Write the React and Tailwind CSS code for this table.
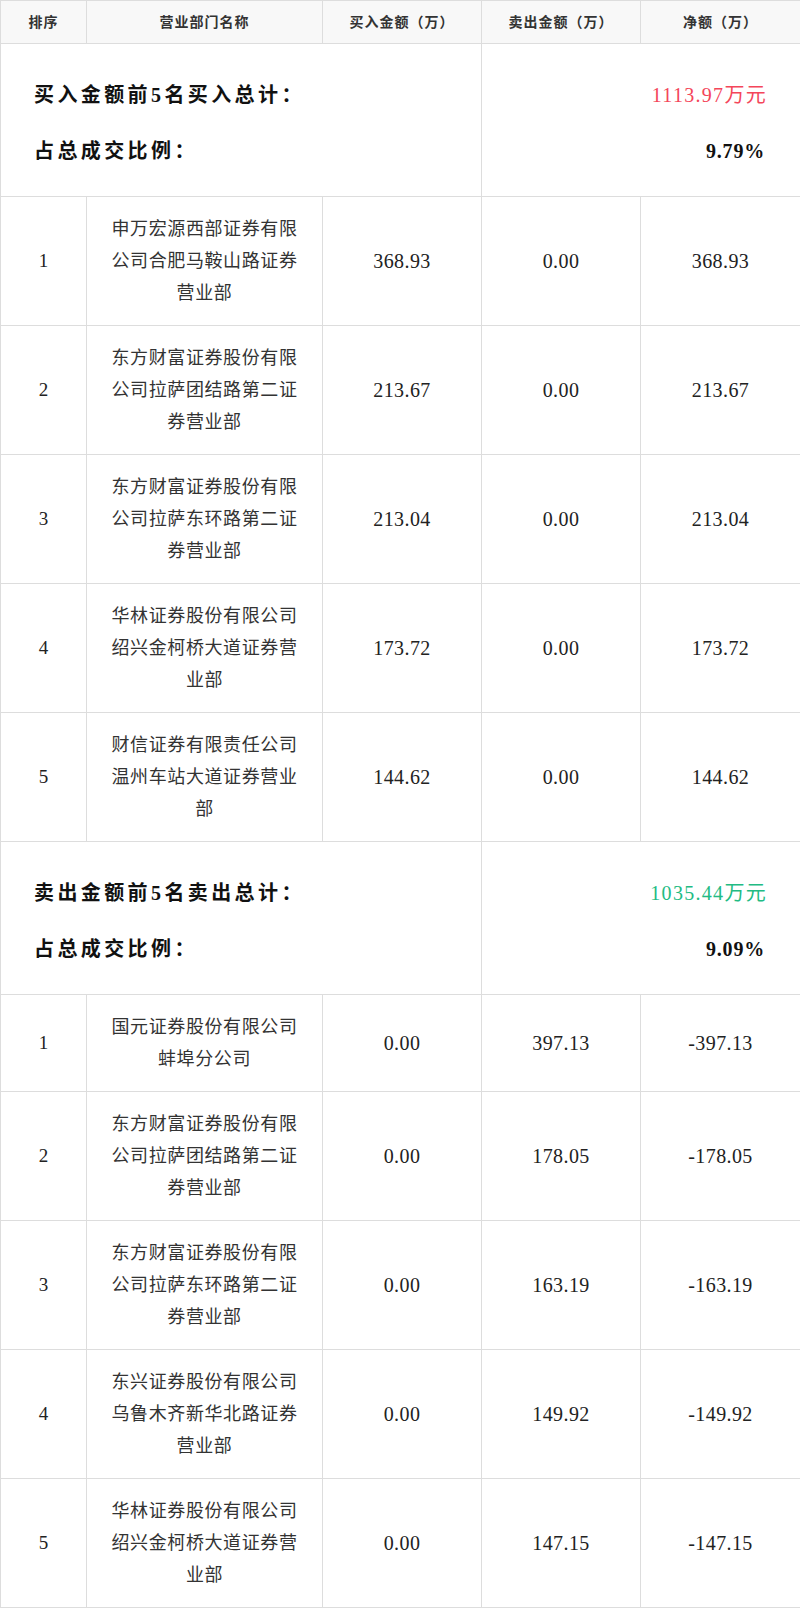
import React from 'react';

const buyRows = [
  ['1', '申万宏源西部证券有限公司合肥马鞍山路证券营业部', '368.93', '0.00', '368.93'],
  ['2', '东方财富证券股份有限公司拉萨团结路第二证券营业部', '213.67', '0.00', '213.67'],
  ['3', '东方财富证券股份有限公司拉萨东环路第二证券营业部', '213.04', '0.00', '213.04'],
  ['4', '华林证券股份有限公司绍兴金柯桥大道证券营业部', '173.72', '0.00', '173.72'],
  ['5', '财信证券有限责任公司温州车站大道证券营业部', '144.62', '0.00', '144.62'],
];

const sellRows = [
  ['1', '国元证券股份有限公司蚌埠分公司', '0.00', '397.13', '-397.13'],
  ['2', '东方财富证券股份有限公司拉萨团结路第二证券营业部', '0.00', '178.05', '-178.05'],
  ['3', '东方财富证券股份有限公司拉萨东环路第二证券营业部', '0.00', '163.19', '-163.19'],
  ['4', '东兴证券股份有限公司乌鲁木齐新华北路证券营业部', '0.00', '149.92', '-149.92'],
  ['5', '华林证券股份有限公司绍兴金柯桥大道证券营业部', '0.00', '147.15', '-147.15'],
];

const font = { fontFamily: '"Liberation Serif", "Noto Sans CJK SC", serif' };

const Summary = ({ label, total, color, ratio }) => (
  <tr>
    <td colSpan={3} className="border border-[#dddddd] pl-[33px] pt-[23px] pb-[17px] align-middle">
      <div className="h-[56px] flex items-center text-[20px] font-bold tracking-[3.4px] text-[#111]">{label}</div>
      <div className="h-[56px] flex items-center text-[20px] font-bold tracking-[3.4px] text-[#111]">占总成交比例：</div>
    </td>
    <td colSpan={2} className="border border-[#dddddd] pr-[33px] pt-[23px] pb-[17px] align-middle">
      <div className={`h-[56px] flex items-center justify-end text-[20px] tracking-[1.3px] ${color}`}>{total}</div>
      <div className="h-[56px] flex items-center justify-end text-[20px] font-bold tracking-[0.8px] text-[#111] pr-[2px]">{ratio}</div>
    </td>
  </tr>
);

const Row = ({ r }) => (
  <tr>
    <td className="border border-[#dddddd] text-center text-[19px] text-[#222]">{r[0]}</td>
    <td className="border border-[#dddddd] text-center px-[20px] py-4 text-[18px] leading-[32px] tracking-[0.6px] text-[#333]">{r[1]}</td>
    <td className="border border-[#dddddd] text-center text-[20px] tracking-[0.4px] text-[#222]">{r[2]}</td>
    <td className="border border-[#dddddd] text-center text-[20px] tracking-[0.4px] text-[#222]">{r[3]}</td>
    <td className="border border-[#dddddd] text-center text-[20px] tracking-[0.4px] text-[#222]">{r[4]}</td>
  </tr>
);

export default function App() {
  return (
    <div className="w-[800px] bg-white" style={font}>
      <table className="w-[800px] table-fixed border-collapse">
        <colgroup>
          <col className="w-[86px]" />
          <col className="w-[236px]" />
          <col className="w-[159px]" />
          <col className="w-[159px]" />
          <col className="w-[160px]" />
        </colgroup>
        <thead>
          <tr className="h-[43px] bg-[#f8f8f8] text-[14px] font-bold text-[#333] tracking-[1px]">
            <th className="border border-[#dddddd] font-bold">排序</th>
            <th className="border border-[#dddddd] font-bold">营业部门名称</th>
            <th className="border border-[#dddddd] font-bold">买入金额（万）</th>
            <th className="border border-[#dddddd] font-bold">卖出金额（万）</th>
            <th className="border border-[#dddddd] font-bold">净额（万）</th>
          </tr>
        </thead>
        <tbody>
          <Summary label="买入金额前5名买入总计：" total="1113.97万元" color="text-[#f4465a]" ratio="9.79%" />
          {buyRows.map((r) => (
            <Row key={'b' + r[0]} r={r} />
          ))}
          <Summary label="卖出金额前5名卖出总计：" total="1035.44万元" color="text-[#22bb83]" ratio="9.09%" />
          {sellRows.map((r) => (
            <Row key={'s' + r[0]} r={r} />
          ))}
        </tbody>
      </table>
    </div>
  );
}
